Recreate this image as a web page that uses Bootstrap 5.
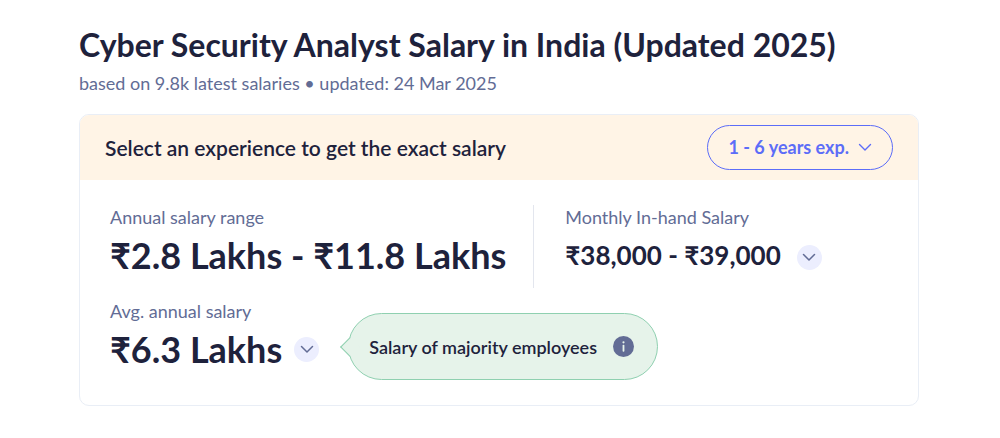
<!DOCTYPE html>
<html lang="en">
<head>
<meta charset="utf-8">
<meta name="viewport" content="width=device-width, initial-scale=1">
<title>Cyber Security Analyst Salary in India</title>
<link href="https://cdn.jsdelivr.net/npm/bootstrap@5.3.0/dist/css/bootstrap.min.css" rel="stylesheet">
<style>
  :root { --ink: #1e223c; --muted: #626c95; --accent: #5c6df8; }
  body { font-family: Lato, "Noto Sans", sans-serif; color: var(--ink); font-size: 18px; line-height: 24px; }
  .page { padding: 25px 8.1% 24px 7.9%; }
  .page-title { font-size: 32px; line-height: 40px; font-weight: 700; margin-bottom: 6px; }
  .muted-text { color: var(--muted); }
  .salary-card { --bs-card-border-color: #e9eef6; --bs-card-border-radius: 10px; --bs-card-inner-border-radius: 9px; margin-top: 19px; color: var(--ink); }
  .exp-bar { background: #fff4e6; border: 0; padding: 10px 25px; }
  .exp-title { font-size: 21px; line-height: 24px; font-weight: 600; }
  .exp-btn { height: 45px; padding: 0 20px; gap: 9px; border: 1px solid var(--accent); color: var(--accent); font-size: 18px; font-weight: 700; }
  .exp-btn:hover { border-color: var(--accent); background: #fff; color: var(--accent); }
  .salary-body { padding: 25px 30px; }
  .range-col { padding-right: 27px; border-right: 1px solid #e3e6ee; height: 83px; }
  .month-col { padding-left: 31px; }
  .amount { font-size: 36px; line-height: 52px; font-weight: 700; }
  .amount-month { font-size: 26px; line-height: 52px; font-weight: 700; }
  .round-btn { width: 25px; height: 25px; background: #eceefe; color: var(--muted); border: 0; }
  .average-row { padding-top: 11px; }
  .bubble { height: 67px; margin: 14px 0 0 29px; padding: 0 23px 0 20px; gap: 16px; background: #e6f3ea; border: 1px solid #8fd0b0; border-radius: 34px; font-weight: 600; }
  .bubble::before { content: ""; position: absolute; left: -6px; top: 26px; width: 14px; height: 14px; background: #e6f3ea; border: solid #8fd0b0; border-width: 0 0 1px 1px; transform: rotate(45deg); }
</style>
</head>
<body>
<main class="page container-fluid">
  <h1 class="page-title">Cyber Security Analyst Salary in India (Updated 2025)</h1>
  <p class="muted-text mb-0">based on 9.8k latest salaries • updated: 24 Mar 2025</p>

  <section class="card salary-card">
    <div class="card-header exp-bar d-flex flex-wrap align-items-center justify-content-between">
      <h2 class="exp-title mb-0">Select an experience to get the exact salary</h2>
      <button type="button" class="btn exp-btn rounded-pill d-inline-flex align-items-center">
        1 - 6 years exp.
        <svg width="14" height="9" viewBox="0 0 14 9" fill="none" stroke="currentColor" stroke-width="1.4" stroke-linecap="round" stroke-linejoin="round" aria-hidden="true"><path d="M1.5 1.5 7 7l5.5-5.5"/></svg>
      </button>
    </div>

    <div class="card-body salary-body">
      <div class="d-flex flex-wrap">
        <div class="range-col">
          <div class="muted-text">Annual salary range</div>
          <div class="amount">₹2.8 Lakhs - ₹11.8 Lakhs</div>
        </div>
        <div class="month-col">
          <div class="muted-text">Monthly In-hand Salary</div>
          <div class="d-flex align-items-center gap-3">
            <span class="amount-month">₹38,000 - ₹39,000</span>
            <button type="button" class="btn round-btn rounded-circle p-0 mt-1 d-flex align-items-center justify-content-center" aria-label="Show monthly breakdown">
              <svg width="14" height="9" viewBox="0 0 14 9" fill="none" stroke="currentColor" stroke-width="1.5" stroke-linecap="round" stroke-linejoin="round" aria-hidden="true"><path d="M1.5 1.5 7 7l5.5-5.5"/></svg>
            </button>
          </div>
        </div>
      </div>

      <div class="average-row d-flex flex-wrap">
        <div>
          <div class="muted-text">Avg. annual salary</div>
          <div class="d-flex align-items-center gap-2">
            <span class="amount">₹6.3 Lakhs</span>
            <button type="button" class="btn round-btn rounded-circle p-0 ms-1 d-flex align-items-center justify-content-center" aria-label="Show average breakdown">
              <svg width="14" height="9" viewBox="0 0 14 9" fill="none" stroke="currentColor" stroke-width="1.5" stroke-linecap="round" stroke-linejoin="round" aria-hidden="true"><path d="M1.5 1.5 7 7l5.5-5.5"/></svg>
            </button>
          </div>
        </div>
        <div class="bubble position-relative d-flex align-items-center">
          Salary of majority employees
          <svg width="21" height="21" viewBox="0 0 21 21" role="img" aria-label="Information"><circle cx="10.5" cy="10.5" r="10.5" fill="#626c95"/><circle cx="10.5" cy="6.3" r="1.1" fill="#e6f3ea"/><rect x="9.6" y="8.7" width="1.8" height="7" rx=".8" fill="#e6f3ea"/></svg>
        </div>
      </div>
    </div>
  </section>
</main>
<script src="https://cdn.jsdelivr.net/npm/bootstrap@5.3.0/dist/js/bootstrap.bundle.min.js"></script>
</body>
</html>
